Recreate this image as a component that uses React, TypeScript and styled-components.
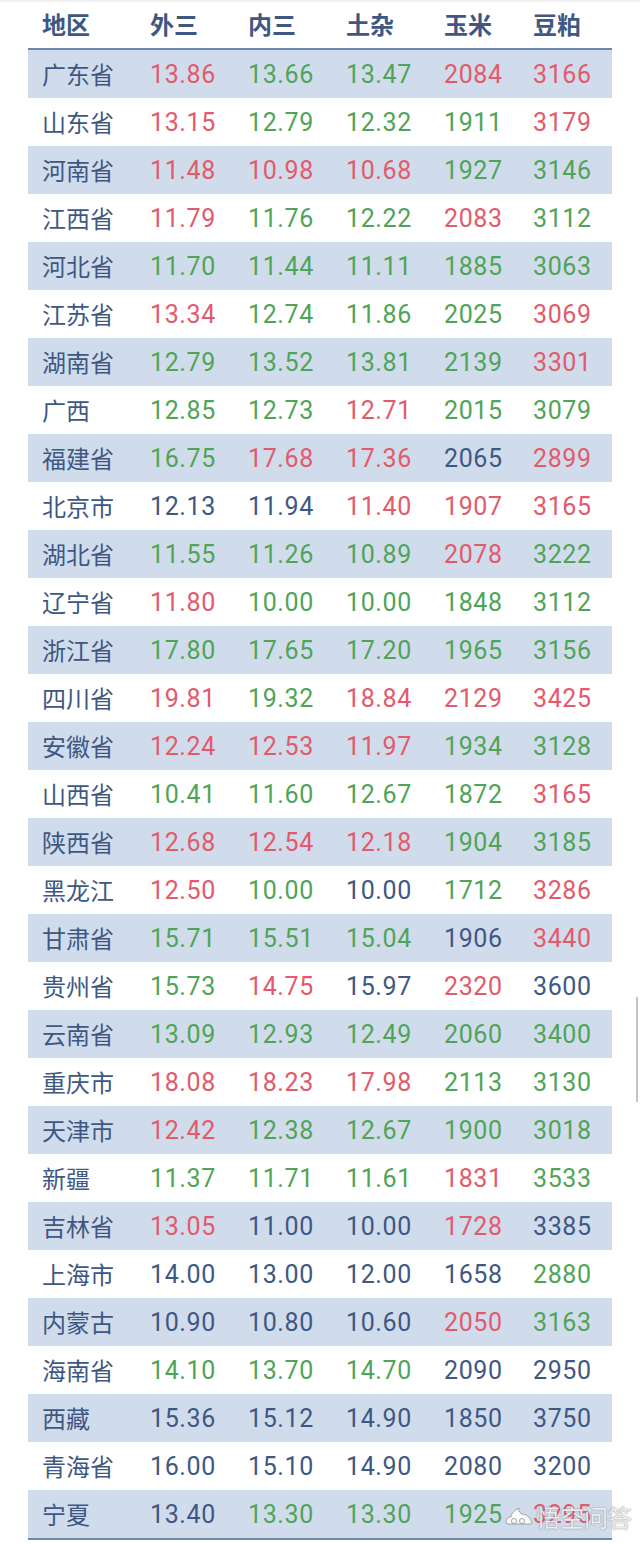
import React from "react";
import styled, { createGlobalStyle } from "styled-components";

type Tone = "r" | "g" | "n";

interface Row {
  area: string;
  cells: [string, Tone][];
}

const GlobalStyle = createGlobalStyle`
  html, body {
    margin: 0;
    padding: 0;
    background: #fff;
  }
  body {
    font-family: Roboto, "Noto Sans CJK SC", sans-serif;
  }
`;

const toneColor: Record<Tone, string> = {
  r: "#e25a6b",
  g: "#4fa457",
  n: "#3e5883",
};

const Page = styled.div`
  position: relative;
  width: 640px;
  height: 1543px;
  border-top: 2px solid #f1f1f1;
  box-sizing: border-box;
  overflow: hidden;
`;

const Table = styled.div`
  margin-left: 28px;
  width: 584px;
  border-bottom: 2px solid #6d87ad;
`;

const Grid = styled.div<{ $band?: boolean; $head?: boolean }>`
  display: grid;
  grid-template-columns: 108px 98px 98px 98px 89px 79px;
  align-items: center;
  padding-left: 14px;
  height: ${(p) => (p.$head ? "46px" : "48px")};
  background: ${(p) => (p.$band ? "#d0dcec" : "#fff")};
  border-bottom: ${(p) => (p.$head ? "2px solid #6d87ad" : "none")};
`;

const HeadCell = styled.div`
  font-family: "Noto Sans CJK SC", sans-serif;
  font-size: 24px;
  font-weight: 700;
  color: #3e5883;
  line-height: 1;
  margin-top: -2px;
`;

const AreaCell = styled.div`
  font-family: "Noto Sans CJK SC", sans-serif;
  font-size: 24px;
  color: #3e5883;
  line-height: 1;
`;

const NumCell = styled.div<{ $tone: Tone }>`
  font-family: Roboto, sans-serif;
  font-size: 25px;
  letter-spacing: 0.6px;
  color: ${(p) => toneColor[p.$tone]};
  line-height: 1;
`;

const Scrollbar = styled.div`
  position: absolute;
  left: 636px;
  top: 995px;
  width: 2px;
  height: 105px;
  background: #c4c4c4;
`;

const Watermark = styled.div`
  position: absolute;
  right: 8px;
  bottom: 14px;
  display: flex;
  align-items: center;
  gap: 2px;
  color: rgba(255, 255, 255, 0.85);
  font-family: "Noto Sans CJK SC", sans-serif;
  font-size: 24px;
  line-height: 1;
  text-shadow: 0 0 1px rgba(120, 120, 120, 0.8), 0 0 2px rgba(120, 120, 120, 0.5);
`;

const headers = ["地区", "外三", "内三", "土杂", "玉米", "豆粕"];

const raw: string[] = [
  "广东省 13.86r 13.66g 13.47g 2084r 3166r",
  "山东省 13.15r 12.79g 12.32g 1911g 3179r",
  "河南省 11.48r 10.98r 10.68r 1927g 3146g",
  "江西省 11.79r 11.76g 12.22g 2083r 3112g",
  "河北省 11.70g 11.44g 11.11g 1885g 3063g",
  "江苏省 13.34r 12.74g 11.86g 2025g 3069r",
  "湖南省 12.79g 13.52g 13.81g 2139g 3301r",
  "广西 12.85g 12.73g 12.71r 2015g 3079g",
  "福建省 16.75g 17.68r 17.36r 2065n 2899r",
  "北京市 12.13n 11.94n 11.40r 1907r 3165r",
  "湖北省 11.55g 11.26g 10.89g 2078r 3222g",
  "辽宁省 11.80r 10.00g 10.00g 1848g 3112g",
  "浙江省 17.80g 17.65g 17.20g 1965g 3156g",
  "四川省 19.81r 19.32g 18.84r 2129r 3425r",
  "安徽省 12.24r 12.53r 11.97r 1934g 3128g",
  "山西省 10.41g 11.60g 12.67g 1872g 3165r",
  "陕西省 12.68r 12.54r 12.18r 1904g 3185g",
  "黑龙江 12.50r 10.00g 10.00n 1712g 3286r",
  "甘肃省 15.71g 15.51g 15.04g 1906n 3440r",
  "贵州省 15.73g 14.75r 15.97n 2320r 3600n",
  "云南省 13.09g 12.93g 12.49g 2060g 3400g",
  "重庆市 18.08r 18.23r 17.98r 2113g 3130g",
  "天津市 12.42r 12.38g 12.67g 1900g 3018g",
  "新疆 11.37g 11.71g 11.61g 1831r 3533g",
  "吉林省 13.05r 11.00n 10.00n 1728r 3385n",
  "上海市 14.00n 13.00n 12.00n 1658n 2880g",
  "内蒙古 10.90n 10.80n 10.60n 2050r 3163g",
  "海南省 14.10g 13.70g 14.70g 2090n 2950n",
  "西藏 15.36n 15.12n 14.90n 1850n 3750n",
  "青海省 16.00n 15.10n 14.90n 2080n 3200n",
  "宁夏 13.40n 13.30g 13.30g 1925g 3295r",
];

const rows: Row[] = raw.map((line) => {
  const [area, ...rest] = line.split(" ");
  return {
    area,
    cells: rest.map((c) => [c.slice(0, -1), c.slice(-1) as Tone]),
  };
});

const Logo = () => (
  <svg width="30" height="22" viewBox="0 0 30 22">
    <g
      fill="rgba(255,255,255,0.85)"
      stroke="rgba(130,130,130,0.7)"
      strokeWidth="1"
    >
      <path d="M3 18c-2-3 0-7 4-7 0-4 4-7 8-9-1 3 1 5 3 6 4 0 8 3 9 7 1 1 1 2 0 3z" />
      <circle cx="10" cy="15" r="2.5" />
      <circle cx="18" cy="15" r="2.5" />
    </g>
  </svg>
);

const App: React.FC = () => {
  return (
    <Page>
      <GlobalStyle />
      <Table>
        <Grid $head>
          {headers.map((h) => (
            <HeadCell key={h}>{h}</HeadCell>
          ))}
        </Grid>
        {rows.map((row, i) => (
          <Grid key={row.area} $band={i % 2 === 0}>
            <AreaCell>{row.area}</AreaCell>
            {row.cells.map(([value, tone], j) => (
              <NumCell key={j} $tone={tone}>
                {value}
              </NumCell>
            ))}
          </Grid>
        ))}
      </Table>
      <Scrollbar />
      <Watermark>
        <Logo />
        <span>悟空问答</span>
      </Watermark>
    </Page>
  );
};

export default App;
